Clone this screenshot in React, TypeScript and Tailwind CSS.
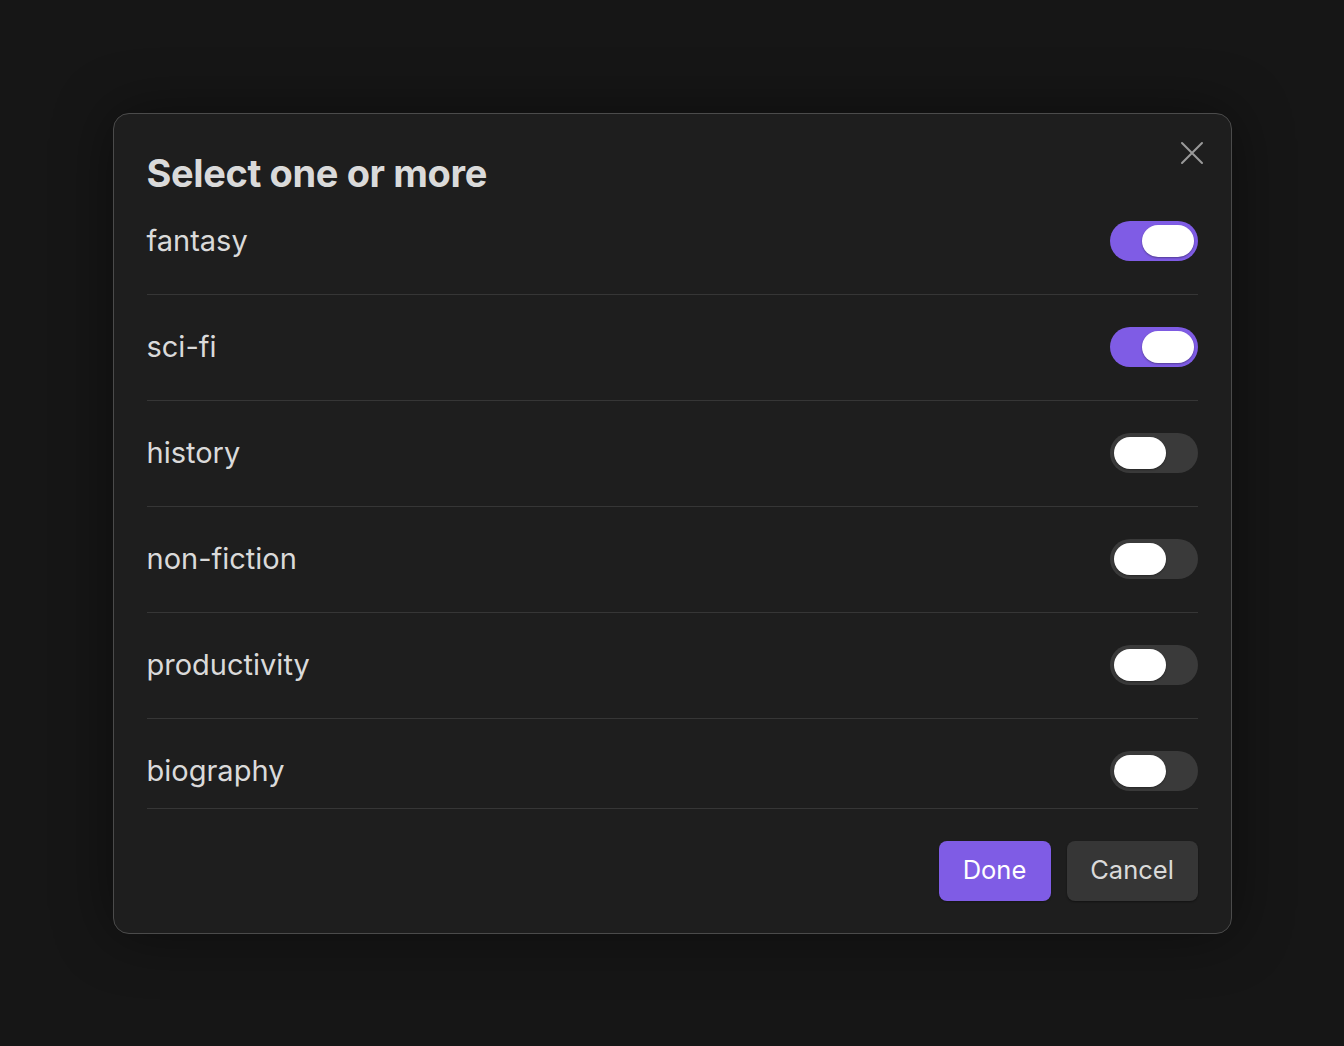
import React, { useState } from 'react';

const genres = ['fantasy', 'sci-fi', 'history', 'non-fiction', 'productivity', 'biography'];

const Toggle: React.FC<{ on: boolean; onClick: () => void }> = ({ on, onClick }) => (
  <button
    onClick={onClick}
    className={`flex h-[40px] w-[88px] shrink-0 items-center rounded-full px-[4px] ${
      on ? 'justify-end bg-[#7f5ce5]' : 'justify-start bg-[#3a3a3a]'
    }`}
  >
    <span className="block h-[32px] w-[52px] rounded-full bg-white shadow-[0_1px_2px_rgba(0,0,0,0.35)]" />
  </button>
);

const App: React.FC = () => {
  const [checked, setChecked] = useState<boolean[]>([true, true, false, false, false, false]);

  const flip = (i: number) => setChecked((c) => c.map((v, j) => (j === i ? !v : v)));

  return (
    <div
      className="flex h-[1046px] w-full items-center justify-center bg-[#161616]"
      style={{ fontFamily: 'Inter, "Noto Sans", sans-serif' }}
    >
      <div className="relative w-[1119px] rounded-[16px] border border-[#4b4b4b] bg-[#1e1e1e] px-[33px] pb-[32px] pt-[39px] shadow-[0_0_60px_rgba(0,0,0,0.45)]">
        <button className="absolute right-[26px] top-[26px] flex h-[26px] w-[26px] items-center justify-center text-[#9a9a9a]">
          <svg width="24" height="24" viewBox="0 0 24 24" fill="none" stroke="currentColor" strokeWidth="2" strokeLinecap="round">
            <path d="M2 2 L22 22 M22 2 L2 22" />
          </svg>
        </button>

        <h1 className="mb-[-5px] h-[41px] text-[38px] font-bold leading-[41px] tracking-[-0.01em] text-[#dadada]">
          Select one or more
        </h1>

        <div className="flex flex-col">
          {genres.map((g, i) => (
            <div
              key={g}
              className={`flex items-center justify-between border-b border-[#363636] pt-[32px] ${
                i === genres.length - 1 ? 'pb-[17px]' : 'pb-[33px]'
              }`}
            >
              <span className="text-[29px] leading-[40px] text-[#dadada]">{g}</span>
              <Toggle on={checked[i]} onClick={() => flip(i)} />
            </div>
          ))}
        </div>

        <div className="mt-[32px] flex justify-end gap-[16px]">
          <button className="h-[60px] w-[112px] rounded-[8px] bg-[#7f5ce5] text-[25.5px] text-white shadow-[0_1px_2px_rgba(0,0,0,0.3)]">
            Done
          </button>
          <button className="h-[60px] w-[131px] rounded-[8px] bg-[#363636] text-[25.5px] text-[#dadada] shadow-[0_1px_2px_rgba(0,0,0,0.4)]">
            Cancel
          </button>
        </div>
      </div>
    </div>
  );
};

export default App;
